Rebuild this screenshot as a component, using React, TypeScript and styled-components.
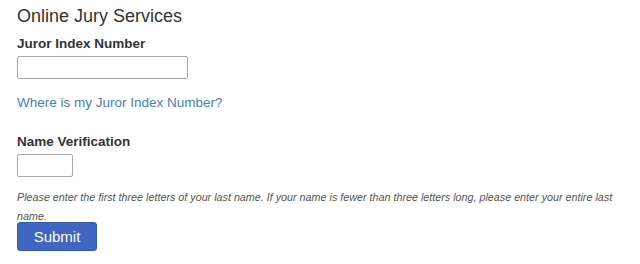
import React from 'react';
import styled, { createGlobalStyle } from 'styled-components';

const GlobalStyles = createGlobalStyle`
  html, body {
    margin: 0;
    padding: 0;
    background: #fff;
  }
  body {
    font-family: "Liberation Sans", Arial, sans-serif;
    color: #333;
  }
`

const Page = styled.main`
  padding: 5px 8px 0 17px;
`

const Title = styled.h1`
  margin: 0 0 8px;
  font-size: 18px;
  font-weight: normal;
  line-height: 22px;
  color: #333;
`

const Field = styled.div<{ gap: number }>`
  display: flex;
  flex-direction: column;
  align-items: flex-start;
  margin-bottom: ${({gap}) => gap}px;
`

const Label = styled.label`
  font-size: 13.5px;
  font-weight: bold;
  line-height: 18px;
  margin-bottom: 3px;
  color: #333;
`

const TextInput = styled.input<{ width: number }>`
  box-sizing: border-box;
  width: ${({width}) => width}px;
  height: 23px;
  padding: 2px 6px;
  border: 1px solid #a9a9a9;
  border-radius: 2px;
  background: #fff;
  font: inherit;

  &:focus-visible {
    outline: none;
  }
`

const HelpLink = styled.a`
  display: block;
  font-size: 13.5px;
  line-height: 18px;
  color: #4a80b8;
  text-decoration: none;
  margin-bottom: 21px;
`

const Hint = styled.p`
  margin: 11px 0 0;
  font-size: 10.75px;
  font-style: italic;
  line-height: 19px;
  color: #555;
`

const SubmitButton = styled.button`
  display: block;
  margin-top: -4px;
  width: 80px;
  height: 29px;
  border: 1px solid #3558a8;
  border-radius: 3px;
  background: #3f66c2;
  color: #fff;
  font-family: "Liberation Sans", Arial, sans-serif;
  font-size: 15px;
`

function App() {
  return (
    <Page>
      <GlobalStyles/>
      <Title>Online Jury Services</Title>
      <Field gap={15}>
        <Label htmlFor="juror">Juror Index Number</Label>
        <TextInput id="juror" type="text" width={171}/>
      </Field>
      <HelpLink href="#">Where is my Juror Index Number?</HelpLink>
      <Field gap={0}>
        <Label htmlFor="name">Name Verification</Label>
        <TextInput id="name" type="text" width={56}/>
      </Field>
      <Hint>
        Please enter the first three letters of your last name. If your name is fewer than three letters long, please enter your entire last name.
      </Hint>
      <SubmitButton type="button">Submit</SubmitButton>
    </Page>
  );
}

export default App;
